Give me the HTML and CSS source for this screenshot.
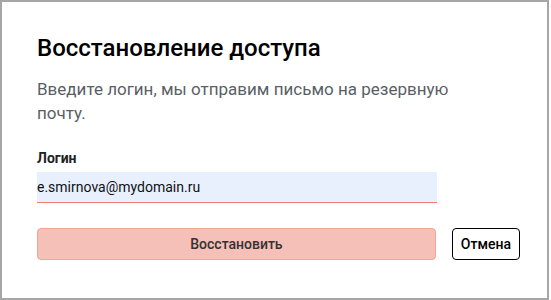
FILE: index.html
```html
<!DOCTYPE html>
<html lang="ru">
<head>
    <meta charset="UTF-8">
    <meta name="viewport" content="width=device-width, initial-scale=1.0">
    <title>Восстановление доступа</title>
    <link rel="stylesheet" href="styles.css">
</head>
<body>
    <div class="dialog">
        <h2 class="dialog-title">Восстановление доступа</h2>
        <p class="dialog-text">Введите логин, мы отправим письмо на резервную почту.</p>
        <label class="field-label" for="login">Логин</label>
        <div class="field-row">
            <input class="field-input" id="login" type="text" value="e.smirnova@mydomain.ru">
        </div>
        <div class="actions">
            <button class="btn btn-primary">Восстановить</button>
            <button class="btn btn-cancel">Отмена</button>
        </div>
    </div>
</body>
</html>
```

FILE: styles.css
```css
body {
    margin: 0;
    background-color: #fff;
    font-family: Roboto, "Noto Sans", sans-serif;
}
.dialog {
    box-sizing: border-box;
    width: 549px;
    height: 300px;
    border: 2px solid #a6a6a6;
    padding: 32px 27px 0 35px;
    display: flex;
    flex-direction: column;
}
.dialog-title {
    margin: 0;
    font-size: 24px;
    font-weight: 500;
    line-height: 28px;
    color: #000;
}
.dialog-text {
    max-width: 430px;
    margin: 15px 0 0;
    font-size: 17px;
    line-height: 24px;
    color: #5a5f66;
}
.field-label {
    display: block;
    margin-top: 25px;
    font-size: 14px;
    font-weight: 700;
    line-height: 16px;
    color: #222;
}
.field-row {
    margin-top: 6px;
}
.field-input {
    box-sizing: border-box;
    width: 400px;
    height: 31px;
    padding: 0;
    border: none;
    border-bottom: 1px solid #ef7d6b;
    background-color: #e8f0fe;
    font-family: inherit;
    font-size: 14px;
    color: #111;
    outline: none;
    display: block;
}
.actions {
    margin-top: 25px;
    display: flex;
    gap: 16px;
}
.btn {
    box-sizing: border-box;
    height: 32px;
    border-radius: 4px;
    font-family: inherit;
    font-size: 14px;
    font-weight: 500;
    cursor: pointer;
}
.btn-primary {
    width: 400px;
    background-color: #f4c0b8;
    border: 1px solid #f0a596;
    color: #333;
}
.btn-cancel {
    padding: 0 8px;
    background-color: #fff;
    border: 1px solid #000;
    color: #000;
}
```
